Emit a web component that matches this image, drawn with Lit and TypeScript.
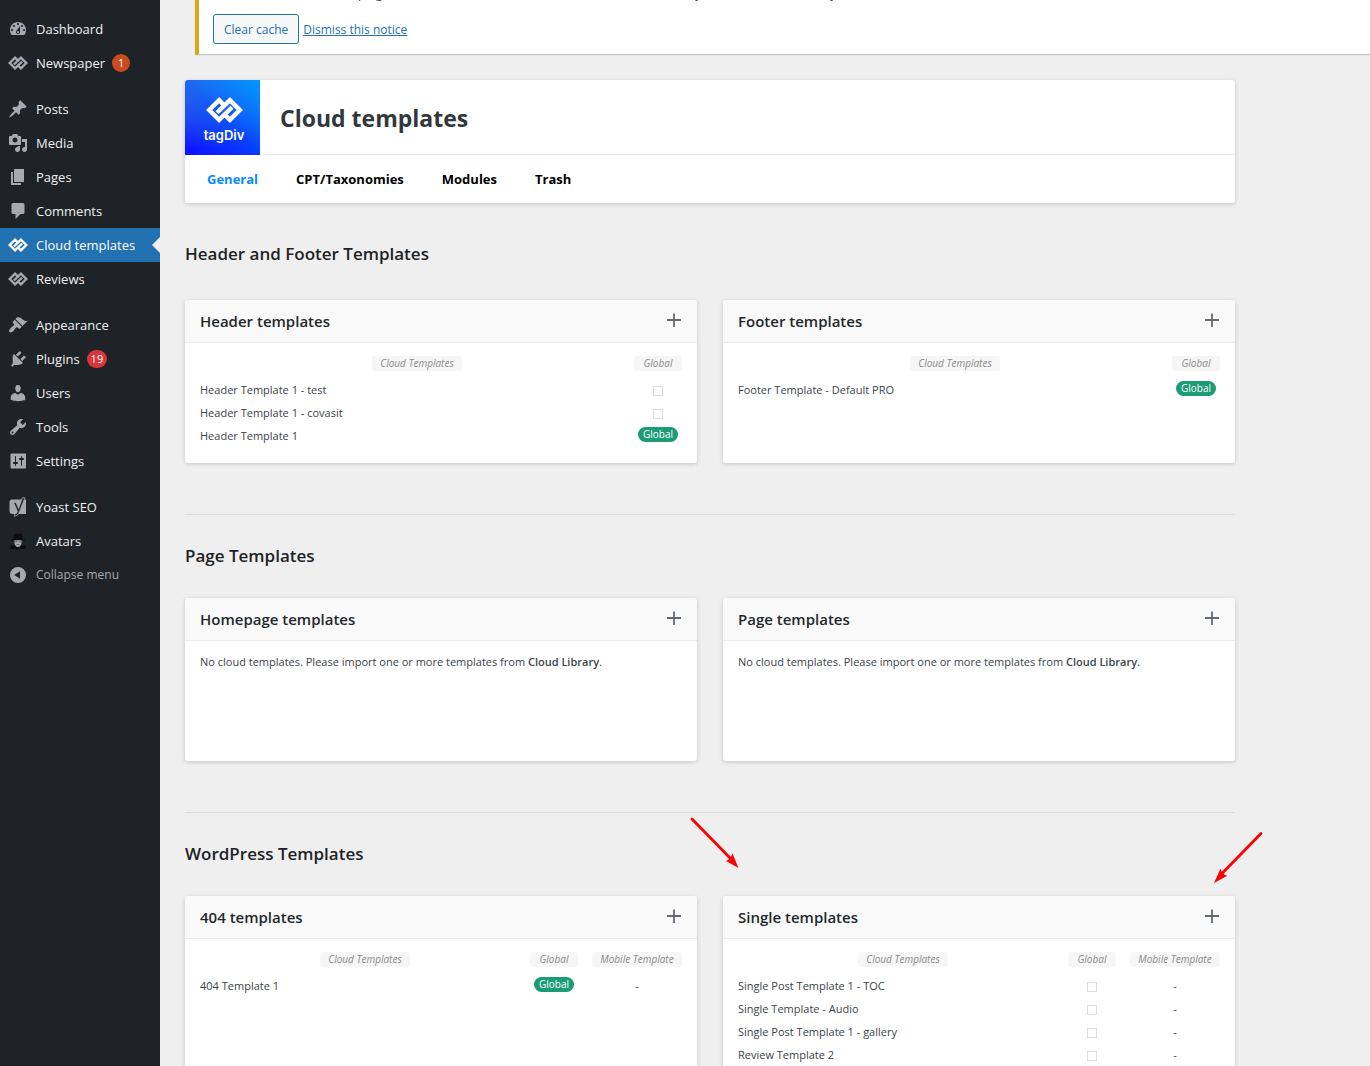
import { LitElement, html, css, svg, nothing, SVGTemplateResult } from "lit";
import { customElement, property } from "lit/decorators.js";

const tagdiv = svg`
  <g fill="none" stroke="currentColor" stroke-width="4.400" stroke-linejoin="miter">
    <path d="M11 15.800 23.900 3.100l9.900 9.900-9.900 9.900-5.400-5.400"/>
    <path d="M26 10.200 13.100 22.900 3.200 13l9.900-9.900 5.400 5.400"/>
  </g>`;

const icons: Record<string, SVGTemplateResult> = {
  dashboard: svg`<path d="M3.76 16h12.48c1.1-1.37 1.76-3.11 1.76-5 0-4.42-3.58-8-8-8s-8 3.58-8 8c0 1.89.66 3.63 1.76 5zM10 4c.55 0 1 .45 1 1s-.45 1-1 1-1-.45-1-1 .45-1 1-1zM6 6c.55 0 1 .45 1 1s-.45 1-1 1-1-.45-1-1 .45-1 1-1zm8 0c.55 0 1 .45 1 1s-.45 1-1 1-1-.45-1-1 .45-1 1-1zm-5.370 5.550L12 7v6c0 1.1-.9 2-2 2s-2-.9-2-2c0-.57.24-1.08.63-1.45zM4 10c.55 0 1 .45 1 1s-.45 1-1 1-1-.45-1-1 .45-1 1-1zm12 0c.55 0 1 .45 1 1s-.45 1-1 1-1-.45-1-1 .45-1 1-1zm-5 3c0-.55-.45-1-1-1s-1 .45-1 1 .45 1 1 1 1-.45 1-1z"/>`,
  posts: svg`<path d="M10.44 3.02l1.82-1.82 6.36 6.35-1.83 1.82c-1.05-.68-2.48-.57-3.41.36l-.75.75c-.92.93-1.04 2.35-.35 3.41l-1.83 1.82-2.41-2.41-2.8 2.79c-.42.42-3.38 2.71-3.8 2.29s1.86-3.39 2.28-3.81l2.79-2.79L4.1 9.36l1.83-1.82c1.05.69 2.48.57 3.4-.36l.75-.75c.93-.92 1.05-2.35.36-3.41z"/>`,
  media: svg`<path d="M13 11V4c0-.55-.45-1-1-1h-1.67L9 1H5L3.67 3H2c-.55 0-1 .45-1 1v7c0 .55.45 1 1 1h10c.55 0 1-.45 1-1zM7 4.5c1.38 0 2.5 1.12 2.5 2.5S8.38 9.5 7 9.5 4.5 8.38 4.5 7 5.62 4.5 7 4.5zM14 6h5v10.5c0 1.38-1.12 2.5-2.5 2.5S14 17.88 14 16.5s1.12-2.5 2.5-2.5c.17 0 .34.02.5.05V9h-3V6zm-4 8.05V13h2v3.5c0 1.38-1.12 2.5-2.5 2.5S7 17.88 7 16.5 8.12 14 9.5 14c.17 0 .34.02.5.05z"/>`,
  pages: svg`<path d="M6 15V2h10v13H6zm-1 1h8v2H3V5h2v11z"/>`,
  comments: svg`<path d="M5 2h10q1.500 0 1.500 1.500V11.500Q16.500 13 15 13h-2.500l-5 5v-5H5Q3.500 13 3.500 11.500V3.500Q3.500 2 5 2z"/>`,
  appearance: svg`<path d="M14.48 11.06L7.41 3.99l1.5-1.5c.5-.56 2.3-.47 3.51.32 1.21.8 1.43 1.28 2.91 2.1 1.18.64 2.45 1.26 4.45.85zm-.71.71L6.7 4.7 4.93 6.47c-.39.39-.39 1.02 0 1.41l1.06 1.06c.39.39.39 1.03 0 1.42-.6.6-1.43 1.11-2.21 1.69-.35.26-.7.53-1.01.84C1.43 14.23.4 16.08 1.4 17.07c.99 1 2.84-.03 4.18-1.36.31-.31.58-.66.85-1.02.57-.78 1.08-1.61 1.69-2.21.39-.39 1.02-.39 1.41 0l1.06 1.06c.39.39 1.02.39 1.41 0z"/>`,
  plugins: svg`<path d="M13.11 4.36L9.87 7.6 8 5.73l3.24-3.24c.35-.34 1.05-.2 1.56.32.52.51.66 1.21.31 1.55zm-8 1.77l.91-1.12 9.01 9.01-1.19.84c-.71.71-2.63 1.16-3.82 1.16H6.14L4.9 17.26c-.38.38-1.01.38-1.4 0-.38-.38-.38-1.01 0-1.4l1.24-1.24v-3.88c0-1.13-.34-3.9.37-4.61zm7.26 3.97l3.24-3.24c.34-.35 1.04-.21 1.55.31.52.51.66 1.21.31 1.55l-3.24 3.25z"/>`,
  users: svg`<path d="M10 9.25c-2.27 0-2.73-3.44-2.73-3.44C7 4.02 7.82 2 9.97 2c2.16 0 2.98 2.02 2.71 3.81 0 0-.41 3.44-2.68 3.44zm0 2.57L12.72 10c2.39 0 4.52 2.33 4.52 4.53v2.49s-3.65 1.13-7.24 1.13c-3.65 0-7.24-1.13-7.24-1.13v-2.49c0-2.25 1.94-4.48 4.47-4.48z"/>`,
  tools: svg`<path d="M16.68 9.77c-1.34 1.34-3.3 1.67-4.95.99l-5.41 6.52c-.99.99-2.59.99-3.58 0s-.99-2.59 0-3.57l6.52-5.42c-.68-1.65-.35-3.61.99-4.95 1.28-1.28 3.12-1.62 4.72-1.06l-2.89 2.89 2.82 2.82 2.86-2.87c.53 1.58.18 3.39-1.08 4.65zM3.81 16.21c.4.39 1.04.39 1.43 0 .4-.4.4-1.04 0-1.43-.39-.4-1.03-.4-1.43 0-.39.39-.39 1.03 0 1.43z"/>`,
  settings: svg`<path d="M18 16.5v-13q0-1-1-1H3.500q-1 0-1 1v13q0 1 1 1H17q1 0 1-1zM8 11h1c.55 0 1 .45 1 1s-.45 1-1 1H8v1.5c0 .28-.22.5-.5.5s-.5-.22-.5-.5V13H6c-.55 0-1-.45-1-1s.45-1 1-1h1V5.5c0-.28.22-.5.5-.5s.5.22.5.5V11zm5-2h-1c-.55 0-1-.45-1-1s.45-1 1-1h1V5.5c0-.28.22-.5.5-.5s.5.22.5.5V7h1c.55 0 1 .45 1 1s-.45 1-1 1h-1v5.5c0 .28-.22.5-.5.5s-.5-.22-.5-.5V9z"/>`,
  yoast: svg`<path d="M4 2.500h14V17H4.500Q1.500 17 1.500 14V5.500Q1.500 2.500 4 2.500z"/><path d="M14.300.8h2.600L11.400 15q-1.600 4.400-5 4.400v-2q2.200-.2 3.100-2.900L5.600 5.600h2.500l2.500 6z" fill="#1d2327" stroke="currentColor" stroke-width=".8"/>`,
  avatars: svg`<path fill="#0b0d0f" d="M6 4q0-1.500 2-1.500l2 .5 2-.5q2 0 2 1.500l.6 4H17v1.300H3V8h2.400zM2.500 18v-3.500h5l2.500 2 2.500-2h5V18z"/><path fill="#a8aaad" d="M6.500 9.300h7V12q-.5 3.700-3.500 4-3-.3-3.500-4z"/><path fill="#555" d="M7.200 10.200h2v1h-2zm3.700 0h2v1h-2zM8.500 13.200h3v.8h-3z"/>`,
  collapse: svg`<path fill-rule="evenodd" d="M10 2a8 8 0 1 1 0 16 8 8 0 0 1 0-16zm2 4.200v7.600L6.200 10z"/>`,
};

interface MenuEntry { icon: string; label: string; count?: number; tone?: string; current?: boolean; }

const menu: MenuEntry[][] = [
  [
    { icon: "dashboard", label: "Dashboard" },
    { icon: "tagdiv", label: "Newspaper", count: 1, tone: "orange" },
  ],
  [
    { icon: "posts", label: "Posts" },
    { icon: "media", label: "Media" },
    { icon: "pages", label: "Pages" },
    { icon: "comments", label: "Comments" },
    { icon: "tagdiv", label: "Cloud templates", current: true },
    { icon: "tagdiv", label: "Reviews" },
  ],
  [
    { icon: "appearance", label: "Appearance" },
    { icon: "plugins", label: "Plugins", count: 19, tone: "red" },
    { icon: "users", label: "Users" },
    { icon: "tools", label: "Tools" },
    { icon: "settings", label: "Settings" },
  ],
  [
    { icon: "yoast", label: "Yoast SEO" },
    { icon: "avatars", label: "Avatars" },
  ],
];

interface Template { name: string; global?: boolean; }
interface CardData { title: string; mobile?: boolean; rows: Template[]; arrows?: boolean; }

const sections: { title: string; cards: CardData[] }[] = [
  {
    title: "Header and Footer Templates",
    cards: [
      {
        title: "Header templates",
        rows: [
          { name: "Header Template 1 - test" },
          { name: "Header Template 1 - covasit" },
          { name: "Header Template 1", global: true },
        ],
      },
      { title: "Footer templates", rows: [{ name: "Footer Template - Default PRO", global: true }] },
    ],
  },
  {
    title: "Page Templates",
    cards: [
      { title: "Homepage templates", rows: [] },
      { title: "Page templates", rows: [] },
    ],
  },
  {
    title: "WordPress Templates",
    cards: [
      { title: "404 templates", mobile: true, rows: [{ name: "404 Template 1", global: true }] },
      {
        title: "Single templates",
        mobile: true,
        arrows: true,
        rows: [
          { name: "Single Post Template 1 - TOC" },
          { name: "Single Template - Audio" },
          { name: "Single Post Template 1 - gallery" },
          { name: "Review Template 2" },
        ],
      },
    ],
  },
];

@customElement("admin-menu")
class AdminMenu extends LitElement {
  static styles = css`
    :host { display: block; background: #1d2327; }
    .list { list-style: none; margin: 0; padding: 0; }
    .menu { display: flex; flex-direction: column; gap: 12px; padding-top: 12px; }
    .link {
      position: relative; display: flex; align-items: center; gap: 8px;
      box-sizing: border-box; width: 100%; height: 34px; padding: 0 8px;
      border: 0; background: none; color: #f0f0f1; text-decoration: none;
      font: inherit; font-size: 13px; line-height: 18px; white-space: nowrap;
    }
    .icon { flex: none; width: 20px; height: 20px; fill: currentColor; color: #a7aaad; }
    .current { background: #2271b1; color: #fff; }
    .current .icon { color: #fff; }
    .current::after {
      content: ""; position: absolute; right: 0; top: 9px;
      border: 8px solid transparent; border-right-color: #f0f0f1; border-left: 0;
    }
    .count {
      min-width: 18px; height: 18px; padding: 0 4px; margin-left: -1px; box-sizing: border-box;
      border-radius: 9px; color: #fff; font-size: 11px; line-height: 18px; text-align: center;
    }
    .orange { background: #ca4a1f; }
    .red { background: #d63638; }
    .collapse { color: #a7aaad; font-size: 12px; cursor: pointer; }
  `;

  render() {
    return html`
      <nav aria-label="Main menu">
        <div class="menu">
          ${menu.map(group => html`<ul class="list">
            ${group.map(m => html`<li>
              <a class="link ${m.current ? "current" : ""}" href="#" aria-current=${m.current ? "page" : nothing}>
                ${m.icon === "tagdiv"
                  ? html`<svg class="icon" viewBox="0 0 37 26" aria-hidden="true">${tagdiv}</svg>`
                  : html`<svg class="icon" viewBox="0 0 20 20" aria-hidden="true">${icons[m.icon]}</svg>`}
                <span>${m.label}</span>
                ${m.count ? html`<span class="count ${m.tone}">${m.count}</span>` : nothing}
              </a>
            </li>`)}
          </ul>`)}
        </div>
        <button class="link collapse" type="button">
          <svg class="icon" viewBox="0 0 20 20" aria-hidden="true">${icons.collapse}</svg>
          <span>Collapse menu</span>
        </button>
      </nav>`;
  }
}

@customElement("template-card")
class TemplateCard extends LitElement {
  @property({ attribute: false }) data!: CardData;

  static styles = css`
    :host { display: block; position: relative; }
    .card {
      box-sizing: border-box; height: 100%; min-height: 163px; background: #fff;
      border-radius: 3px; box-shadow: 0 1px 4px rgba(0, 0, 0, 0.18); color: #3c434a;
    }
    .head {
      display: flex; align-items: center; justify-content: space-between;
      height: 42px; padding: 0 15px; background: #f9f9f9;
      border-bottom: 1px solid #ebebeb; border-radius: 3px 3px 0 0;
    }
    .title { margin: 0; font-size: 15px; line-height: 20px; font-weight: 600; color: #23282d; }
    .add { display: flex; padding: 0 0 2px; border: 0; background: none; color: #646970; cursor: pointer; }
    .plus { width: 16px; height: 16px; }
    .body { padding: 13px 15px 16px; font-size: 11px; line-height: 16px; }
    .empty { margin: 0; }
    .strong { color: #3c434a; text-decoration: none; font-weight: 600; }
    .table { width: 100%; border-collapse: collapse; table-layout: fixed; }
    .th { height: 22px; padding: 0; font-weight: 400; vertical-align: top; text-align: center; }
    .flag { width: 48px; }
    .th.mobile { width: 90px; }
    .th.mobile, .td.mobile { padding-left: 14px; }
    .pill {
      display: block; width: fit-content; margin: 0 auto; box-sizing: border-box; padding: 0 8px; height: 15px;
      border-radius: 3px; background: #f6f6f6; color: #8a8a8a;
      font-size: 10px; line-height: 15px; font-style: italic; white-space: nowrap;
    }
    .fill { width: auto; padding: 0; }
    .td { height: 23px; padding: 0; vertical-align: middle; text-align: center; line-height: 15px; }
    .td.name { text-align: left; }
    .link { color: inherit; text-decoration: none; }
    .box {
      appearance: none; display: block; margin: 2px auto 0; width: 10px; height: 10px;
      border: 1px solid #dcdcde; background: #fff; border-radius: 0;
    }
    .badge {
      display: block; margin: 0 auto 3px; width: 40px; height: 15px; border-radius: 8px;
      background: #1b9c74; color: #fff; font-size: 10px; line-height: 15px;
    }
    .arrow { position: absolute; width: 56px; height: 56px; pointer-events: none; }
    .arrow-left { left: -35px; top: -81px; }
    .arrow-right { right: -31px; top: -67px; }
  `;

  private renderTable() {
    const { rows, mobile, title } = this.data;
    return html`<table class="table" aria-label=${title}>
      <thead><tr>
        <th class="th" scope="col"><span class="pill">Cloud Templates</span></th>
        <th class="th flag" scope="col"><span class="pill fill">Global</span></th>
        ${mobile ? html`<th class="th mobile" scope="col"><span class="pill fill">Mobile Template</span></th>` : nothing}
      </tr></thead>
      <tbody>
        ${rows.map(r => html`<tr>
          <td class="td name"><a class="link" href="#">${r.name}</a></td>
          <td class="td">${r.global
            ? html`<span class="badge">Global</span>`
            : html`<input class="box" type="checkbox" aria-label="Set ${r.name} as global">`}</td>
          ${mobile ? html`<td class="td mobile">-</td>` : nothing}
        </tr>`)}
      </tbody>
    </table>`;
  }

  render() {
    const { title, rows, arrows } = this.data;
    return html`
      <article class="card">
        <header class="head">
          <h3 class="title">${title}</h3>
          <button class="add" type="button" aria-label="Add to ${title}">
            <svg class="plus" viewBox="0 0 16 16" aria-hidden="true"><path d="M8 1.500v13.500M1 8h14" stroke="currentColor" stroke-width="1.800" fill="none"/></svg>
          </button>
        </header>
        <div class="body">
          ${rows.length
            ? this.renderTable()
            : html`<p class="empty">No cloud templates. Please import one or more templates from <a class="strong" href="#">Cloud Library</a>.</p>`}
        </div>
      </article>
      ${arrows ? html`
        <svg class="arrow arrow-left" viewBox="0 0 56 56" aria-hidden="true">
          <path d="M4 4 43 44" stroke="#f00" stroke-width="2.800" stroke-linecap="round"/><path fill="#f00" d="M50.500 53 38 46l2.500-1.500 2.500-2.500 1.500-3.500z"/>
        </svg>
        <svg class="arrow arrow-right" viewBox="0 0 56 56" aria-hidden="true">
          <path d="M51 4.500 12 44.500" stroke="#f00" stroke-width="2.800" stroke-linecap="round"/><path fill="#f00" d="M4 54l6.500-14.200 1.500 3.500 2.500 2.500 2.800 1z"/>
        </svg>` : nothing}`;
  }
}

@customElement("app-root")
class AppRoot extends LitElement {
  static styles = css`
    :host {
      display: grid; grid-template-columns: 160px minmax(0, 1fr); height: 100vh; overflow: hidden;
      background: #f0f0f1; color: #3c434a; font-family: "Segoe UI", "Open Sans", sans-serif; font-size: 12px;
    }
    .main { overflow: hidden; background: #efefef; }
    .notice {
      margin: -16px 0 25px 35px; padding: 0 14px 10px; background: #fff;
      border-left: 4px solid #dba617; border-bottom: 1px solid #c3c4c7; box-shadow: 0 1px 1px rgba(0, 0, 0, 0.04);
    }
    .text { margin: 0; line-height: 20px; }
    .actions { display: flex; align-items: center; gap: 4px; padding-top: 10px; }
    .clear {
      box-sizing: border-box; height: 30px; padding: 0 10px; border: 1px solid #2271b1; border-radius: 3px;
      background: #f6f7f7; color: #2271b1; font: inherit; font-size: 12px; cursor: pointer;
    }
    .dismiss { color: #2271b1; }
    .content { max-width: 1050px; margin: 0 25px; }
    .panel { background: #fff; border-radius: 3px; box-shadow: 0 1px 4px rgba(0, 0, 0, 0.18); }
    .brand { display: flex; align-items: center; gap: 20px; border-bottom: 1px solid #ebebeb; height: 74px; }
    .logo {
      align-self: flex-start; display: flex; flex-direction: column; align-items: center; box-sizing: border-box;
      width: 75px; height: 75px; padding: 17px 0 0 3px; border-radius: 3px 0 0 0; color: #fff;
      background: linear-gradient(to bottom left, rgba(0, 150, 255, 1), rgba(0, 90, 255, 0.6) 50%, rgba(20, 20, 255, 0)), linear-gradient(#4a80d8, #1010ff 90%);
      font-family: "Inter", sans-serif; font-weight: 600; font-size: 13px; line-height: 16px;
    }
    .mark { width: 37px; height: 26px; margin-bottom: 4px; }
    .heading { margin: 0; padding-top: 2px; font-size: 23px; line-height: 32px; font-weight: 700; color: #32373c; }
    .tabs { display: flex; align-items: center; gap: 38px; height: 48px; padding: 0 22px; }
    .tab { color: #000; font-size: 13px; line-height: 20px; font-weight: 700; text-decoration: none; }
    .active { color: #0a8aff; }
    .section { padding-top: 38px; padding-bottom: 51px; }
    .section + .section { border-top: 1px solid #dcdcde; padding-top: 28px; }
    .subtitle { margin: 0 0 33px; font-size: 17px; line-height: 26px; font-weight: 600; color: #1d2327; }
    .section + .section .subtitle { margin-bottom: 29px; }
    .cards { display: grid; grid-template-columns: repeat(2, minmax(0, 1fr)); gap: 26px; }
  `;

  render() {
    return html`
      <admin-menu></admin-menu>
      <main class="main">
        <div class="notice">
          <p class="text"><strong>WP Rocket:</strong> One or more plugins have been enabled or disabled, clear the cache if they affect the front end of your site.</p>
          <div class="actions">
            <button class="clear" type="button">Clear cache</button>
            <a class="dismiss" href="#">Dismiss this notice</a>
          </div>
        </div>
        <div class="content">
          <header class="panel">
            <div class="brand">
              <div class="logo">
                <svg class="mark" viewBox="0 0 37 26" aria-hidden="true">${tagdiv}</svg>
                <span>tagDiv</span>
              </div>
              <h1 class="heading">Cloud templates</h1>
            </div>
            <nav class="tabs" aria-label="Template types">
              <a class="tab active" href="#" aria-current="page">General</a>
              <a class="tab" href="#">CPT/Taxonomies</a>
              <a class="tab" href="#">Modules</a>
              <a class="tab" href="#">Trash</a>
            </nav>
          </header>
          ${sections.map(s => html`<section class="section">
            <h2 class="subtitle">${s.title}</h2>
            <div class="cards">${s.cards.map(c => html`<template-card .data=${c}></template-card>`)}</div>
          </section>`)}
        </div>
      </main>`;
  }
}
